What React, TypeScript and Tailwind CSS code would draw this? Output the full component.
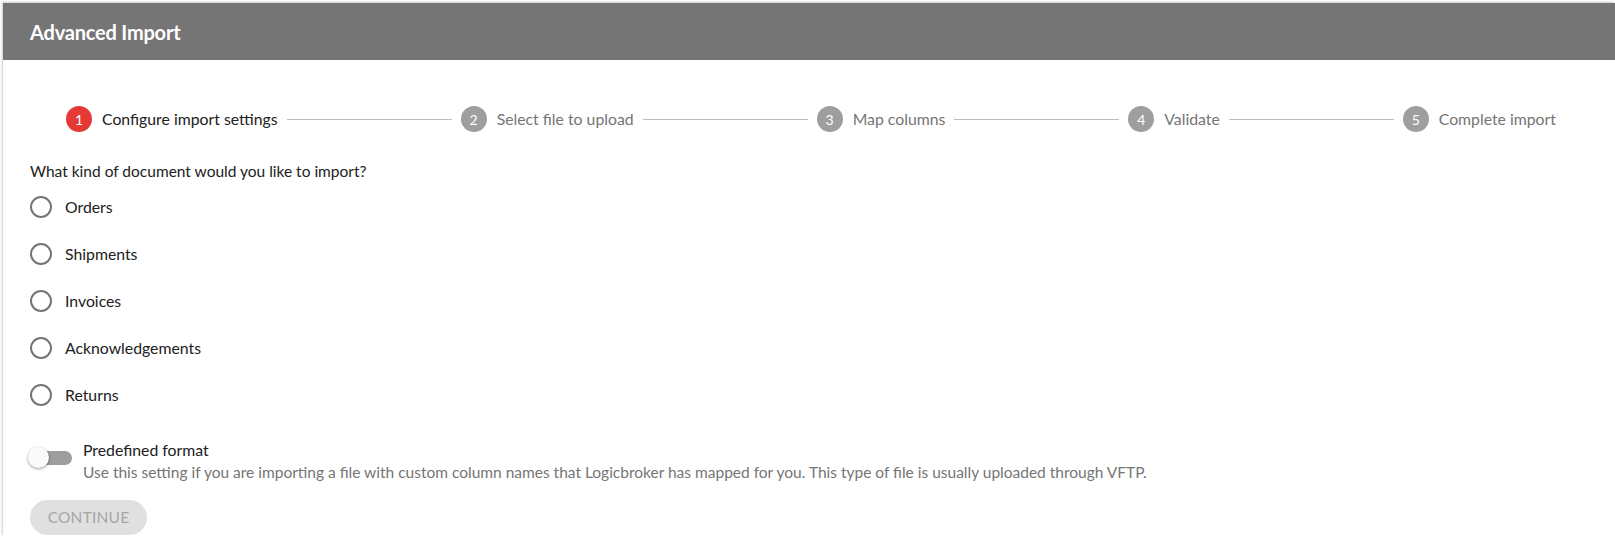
import React from "react";

const steps = [
  "Configure import settings",
  "Select file to upload",
  "Map columns",
  "Validate",
  "Complete import",
];

const options = ["Orders", "Shipments", "Invoices", "Acknowledgements", "Returns"];

function RadioIcon() {
  return (
    <svg width="24" height="24" viewBox="0 0 24 24" className="shrink-0">
      <circle cx="12" cy="12" r="10" fill="none" stroke="#757575" strokeWidth="2" />
    </svg>
  );
}

export default function App() {
  return (
    <div
      className="w-full h-[547px] bg-white pl-[3px] pt-[3px] overflow-hidden"
      style={{ fontFamily: "Lato, 'Open Sans', sans-serif" }}
    >
      <div className="bg-white h-[533px] shadow-[-1px_-1px_2px_rgba(0,0,0,0.2)] flex flex-col">
        <div className="h-[57px] bg-[#757575] flex items-center pl-[27px] shrink-0">
          <h1 className="text-white text-[20px] font-bold leading-none tracking-[-0.2px]">Advanced Import</h1>
        </div>
        <div className="pl-[27px] flex flex-col">
          {/* Stepper */}
          <div className="mt-[46px] ml-[36px] mr-[59px] flex items-center h-[26px]">
            {steps.map((s, i) => (
              <React.Fragment key={s}>
                {i > 0 && <div className="flex-1 h-px bg-[#bdbdbd] mx-[9px]" />}
                <div className="flex items-center shrink-0">
                  <div
                    className={
                      "w-[26px] h-[26px] rounded-full flex items-center justify-center text-white text-[14px] " +
                      (i === 0 ? "bg-[#e53935]" : "bg-[#9e9e9e]")
                    }
                  >
                    {i + 1}
                  </div>
                  <span
                    className={
                      "ml-[10px] text-[15.8px] leading-none " +
                      (i === 0 ? "text-[#212121]" : "text-[#757575]")
                    }
                  >
                    {s}
                  </span>
                </div>
              </React.Fragment>
            ))}
          </div>

          {/* Question */}
          <div className="mt-[29px] text-[15.5px] leading-[20px] text-[#212121]">
            What kind of document would you like to import?
          </div>
          <div className="flex flex-col mt-[2px]">
            {options.map((o) => (
              <label key={o} className="h-[47px] flex items-center">
                <span className="ml-[-1px]">
                  <RadioIcon />
                </span>
                <span className="ml-[12px] text-[15.8px] text-[#212121]">{o}</span>
              </label>
            ))}
          </div>

          {/* Predefined format */}
          <div className="mt-[20px] flex items-start">
            <div className="relative w-[46px] h-[22px] mt-[9px] ml-[-2px] shrink-0">
              <div className="absolute left-[8px] top-[4px] w-[36px] h-[14px] rounded-full bg-[#9e9e9e]" />
              <div className="absolute left-0 top-0 w-[21px] h-[21px] rounded-full bg-[#fafafa] shadow-[0_1px_3px_rgba(0,0,0,0.4)]" />
            </div>
            <div className="ml-[9px] flex flex-col">
              <span className="text-[15.8px] leading-[23px] text-[#212121]">Predefined format</span>
              <span className="text-[15.5px] leading-[23px] text-[#757575]">
                Use this setting if you are importing a file with custom column names that Logicbroker has mapped for you. This type of file is usually uploaded through VFTP.
              </span>
            </div>
          </div>

          <div className="mt-[16px]">
            <button className="w-[117px] h-[35px] rounded-full bg-[#e0e0e0] text-[#a6a6a6] text-[15.5px] tracking-[0.2px]">
              CONTINUE
            </button>
          </div>
        </div>
      </div>
    </div>
  );
}
